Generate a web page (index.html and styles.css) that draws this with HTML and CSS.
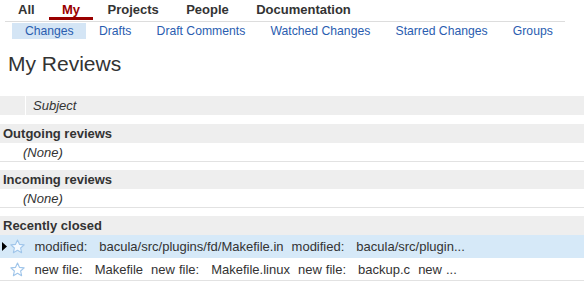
FILE: index.html
```html
<!DOCTYPE html>
<html>
<head>
<meta charset="utf-8">
<title>My Reviews</title>
<link rel="stylesheet" href="styles.css">
</head>
<body>
<div class="menubar">
  <ul class="topnav">
    <li>All</li>
    <li class="active">My</li>
    <li>Projects</li>
    <li>People</li>
    <li>Documentation</li>
  </ul>
  <ul class="subnav">
    <li class="active">Changes</li>
    <li>Drafts</li>
    <li>Draft Comments</li>
    <li>Watched Changes</li>
    <li>Starred Changes</li>
    <li>Groups</li>
  </ul>
</div>
<h1 class="title">My Reviews</h1>
<table class="changes">
  <tr class="head">
    <th class="lead" colspan="2"></th>
    <th class="subject">Subject</th>
  </tr>
  <tr class="spacer first"><td colspan="3"></td></tr>
  <tr class="section"><td colspan="3">Outgoing reviews</td></tr>
  <tr class="empty"><td colspan="3">(None)</td></tr>
  <tr class="spacer"><td colspan="3"></td></tr>
  <tr class="section"><td colspan="3">Incoming reviews</td></tr>
  <tr class="empty"><td colspan="3">(None)</td></tr>
  <tr class="spacer"><td colspan="3"></td></tr>
  <tr class="section"><td colspan="3">Recently closed</td></tr>
  <tr class="change current">
    <td class="pointer"><svg width="5" height="9" viewBox="0 0 5 9"><path d="M0 0 L5 4.5 L0 9 Z" fill="#000"/></svg></td>
    <td class="star"><svg width="15" height="15" viewBox="0 0 15 15"><path d="M7.5 1 L9.44 5.33 L14.16 5.84 L10.64 9.02 L11.61 13.66 L7.5 11.3 L3.39 13.66 L4.36 9.02 L0.84 5.84 L5.56 5.33 Z" fill="#f5faff" stroke="#9fc5ea" stroke-width="1.1" stroke-linejoin="round"/></svg></td>
    <td class="text">modified:   bacula/src/plugins/fd/Makefile.in  modified:   bacula/src/plugin...</td>
  </tr>
  <tr class="change">
    <td class="pointer"></td>
    <td class="star"><svg width="15" height="15" viewBox="0 0 15 15"><path d="M7.5 1 L9.44 5.33 L14.16 5.84 L10.64 9.02 L11.61 13.66 L7.5 11.3 L3.39 13.66 L4.36 9.02 L0.84 5.84 L5.56 5.33 Z" fill="#fff" stroke="#9fc5ea" stroke-width="1.1" stroke-linejoin="round"/></svg></td>
    <td class="text">new file:   Makefile  new file:   Makefile.linux  new file:   backup.c  new ...</td>
  </tr>
</table>
</body>
</html>
```
FILE: styles.css
```css
body {
  margin: 0;
  font-family: "Liberation Sans", Arial, sans-serif;
  color: #333;
  background: #fff;
}

.menubar {
  width: max-content;
  margin-left: 5px;
}

.topnav {
  display: flex;
  gap: 1.4px;
  margin: 0;
  padding: 0;
  list-style: none;
}

.topnav li {
  padding: 2px 13px 0;
  line-height: 15px;
  font-size: 13px;
  font-weight: bold;
  color: #333;
  border-bottom: 3px solid transparent;
  margin-bottom: 1px;
}

.topnav li.active {
  color: #990000;
  border-bottom-color: #990000;
}

.subnav {
  display: flex;
  margin: 0;
  padding: 1px 0 0 7.3px;
  list-style: none;
  border-top: 1px solid #dddddd;
}

.subnav li {
  padding: 0 12.6px;
  line-height: 16px;
  font-size: 12.2px;
  color: #2a5db0;
}

.subnav li.active {
  background: #d4e5f5;
}

.title {
  margin: 13px 0 20px 8px;
  font-size: 21px;
  line-height: 24px;
  font-weight: normal;
  color: #333;
}

.changes {
  width: 100%;
  border-collapse: collapse;
  border-spacing: 0;
  font-size: 13px;
}

.changes td,
.changes th {
  padding: 0;
}

.head th {
  background: #eeeeee;
  height: 19px;
  line-height: 19px;
  font-style: italic;
  font-weight: normal;
  text-align: left;
}

.head th.lead {
  width: 25px;
  border-right: 1px solid #fff;
}

.head th.subject {
  padding-left: 7px;
}

.spacer td {
  height: 8px;
  line-height: 0;
  font-size: 0;
}

.spacer.first td {
  height: 9px;
}

.changes .section td {
  background: #eeeeee;
  height: 18px;
  padding-top: 1px;
  line-height: 18px;
  font-weight: bold;
  padding-left: 3px;
}

.changes .empty td {
  height: 17px;
  padding-top: 1px;
  line-height: 17px;
  font-style: italic;
  padding-left: 23px;
  border-bottom: 1px solid #e2e2e2;
}

.change td {
  height: 22px;
  border-bottom: 1px solid #e2e2e2;
  vertical-align: middle;
}

.change.current td {
  background: #d6e9f8;
  border-bottom-color: #d6e9f8;
}

.change td.pointer {
  width: 7px;
  padding-left: 2px;
  line-height: 0;
}

.change td.star {
  width: 15px;
  padding-left: 1px;
  line-height: 0;
}

.change td.text {
  padding-left: 9px;
  white-space: pre;
  word-spacing: 0.4px;
  color: #333;
}
```
